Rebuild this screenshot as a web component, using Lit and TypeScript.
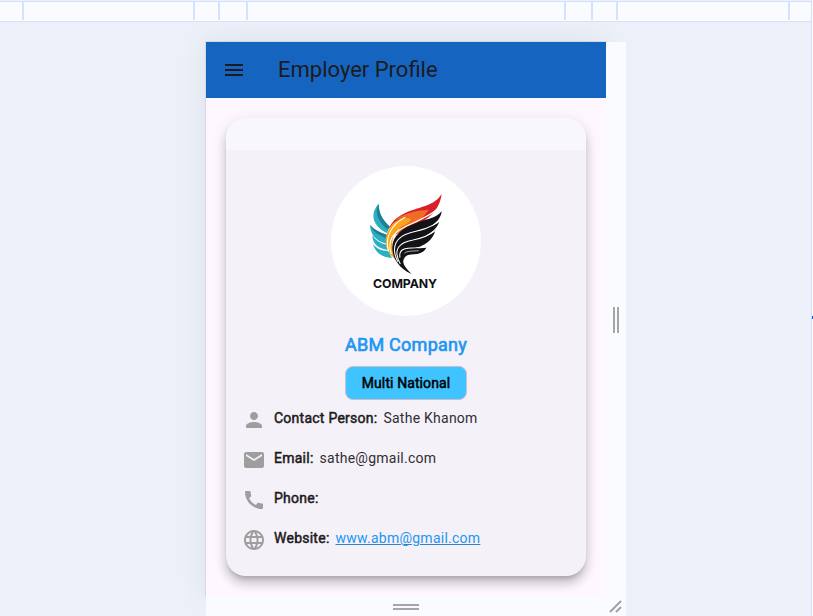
import { LitElement, html, css, svg } from "lit";
import { customElement } from "lit/decorators.js";

const ICONS = {
  person: svg`<path d="M12 12c2.21 0 4-1.79 4-4s-1.79-4-4-4-4 1.79-4 4 1.79 4 4 4zm0 2c-2.67 0-8 1.34-8 4v2h16v-2c0-2.66-5.33-4-8-4z"/>`,
  mail: svg`<path d="M20 4H4c-1.1 0-1.99.9-1.99 2L2 18c0 1.1.9 2 2 2h16c1.1 0 2-.9 2-2V6c0-1.1-.9-2-2-2zm0 4l-8 5-8-5V6l8 5 8-5v2z"/>`,
  phone: svg`<path d="M20.01 15.38c-1.23 0-2.42-.2-3.53-.56-.35-.12-.74-.03-1.01.24l-1.57 1.97c-2.83-1.35-5.48-3.9-6.89-6.83l1.95-1.66c.27-.28.35-.67.24-1.02-.37-1.11-.56-2.3-.56-3.53 0-.54-.45-.99-.99-.99H4.19C3.65 3 3 3.24 3 3.99 3 13.28 10.73 21 20.01 21c.71 0 .99-.63.99-1.18v-3.45c0-.54-.45-.99-.99-.99z"/>`,
  globe: svg`<path d="M11.99 2C6.47 2 2 6.48 2 12s4.47 10 9.99 10C17.52 22 22 17.52 22 12S17.52 2 11.99 2zm6.93 6h-2.95c-.32-1.25-.78-2.45-1.38-3.56 1.84.63 3.37 1.91 4.33 3.56zM12 4.04c.83 1.2 1.48 2.53 1.91 3.96h-3.82c.43-1.43 1.08-2.76 1.91-3.96zM4.26 14C4.1 13.36 4 12.69 4 12s.1-1.36.26-2h3.38c-.08.66-.14 1.32-.14 2s.06 1.34.14 2H4.26zm.82 2h2.95c.32 1.25.78 2.45 1.38 3.56-1.84-.63-3.37-1.9-4.33-3.56zm2.95-8H5.08c.96-1.66 2.49-2.93 4.33-3.56C8.81 5.55 8.35 6.75 8.03 8zM12 19.96c-.83-1.2-1.48-2.53-1.91-3.96h3.82c-.43 1.43-1.08 2.76-1.91 3.96zM14.34 14H9.66c-.09-.66-.16-1.32-.16-2s.07-1.35.16-2h4.68c.09.65.16 1.32.16 2s-.07 1.34-.16 2zm.25 5.56c.6-1.11 1.06-2.31 1.38-3.56h2.95c-.96 1.65-2.49 2.93-4.33 3.56zM16.36 14c.08-.66.14-1.32.14-2s-.06-1.34-.14-2h3.38c.16.64.26 1.31.26 2s-.1 1.36-.26 2h-3.38z"/>`,
};

const ROWS: { icon: keyof typeof ICONS; label: string; value: string; link?: boolean }[] = [
  { icon: "person", label: "Contact Person:", value: "Sathe Khanom" },
  { icon: "mail", label: "Email:", value: "sathe@gmail.com" },
  { icon: "phone", label: "Phone:", value: "" },
  { icon: "globe", label: "Website:", value: "www.abm@gmail.com", link: true },
];

const RULER_TICKS = [22, 193, 218, 246, 564, 591, 616, 788];

@customElement("company-logo")
export class CompanyLogo extends LitElement {
  static styles = css`
    :host { display: flex; flex-direction: column; align-items: center; width: 150px; height: 150px; border-radius: 50%; background: #fff; overflow: hidden; }
    .wings { display: block; width: 100px; height: 96px; margin-top: 14px; flex: none; }
    .name { font: 700 12.3px/14px Inter, sans-serif; color: #111116; letter-spacing: -.1px; white-space: nowrap; margin: 1px 2px 0 0; }
  `;
  render() {
    return html`
      <svg class="wings" viewBox="0 0 300 288">
        <g fill="#2bafc3">
          <path d="M68 71C42 100 47 136 94 160C95 151 98 145 102 140C82 122 68 102 68 71Z"/>
          <path d="M42 135C43 165 61 184 91 191L93 164C71 158 54 149 42 135Z"/>
          <path d="M49 166C49 191 66 206 96 210L91 194C71 190 59 181 49 166Z"/>
          <path d="M51 193C60 221 79 232 108 234L97 213C76 213 62 206 51 193Z"/>
        </g>
        <g fill="#1f7f96">
          <path d="M68 71C56 94 62 120 95 149L102 140C82 122 68 102 68 71Z"/>
          <path d="M42 135C51 156 69 168 92 174L93 164C71 158 54 149 42 135Z"/>
        </g>
        <path fill="#da1f2c" d="M257 42C235 78 192 80 154 96C124 109 108 124 100 143L146 150C198 130 249 104 257 42Z"/>
        <path fill="#ef6c24" d="M218 89C176 91 138 103 117 120C144 113 160 117 148 132C141 142 127 150 117 165C151 150 188 134 218 90Z"/>
        <path fill="#f9a61c" d="M90 195C85 160 107 111 158 115C168 117 163 125 152 132C132 143 119 153 112 171C104 194 113 219 124 242C103 227 92 212 90 195Z"/>
        <path fill="#121217" d="M257 94C239 116 208 119 182 128C137 143 107 169 109 207C110 223 116 238 124 248C134 263 149 274 167 282C151 265 136 250 144 236C150 222 166 224 184 222C197 220 207 213 212 202C201 205 191 205 182 204C207 195 231 181 238 151C230 159 221 163 211 166C231 155 243 143 250 125C243 131 235 135 228 137C242 127 255 114 257 94Z"/>
        <g fill="none" stroke="#fff" stroke-width="3.2">
          <path d="M98 215C85 173 106 133 148 112"/>
          <path d="M106 222C92 180 113 157 147 140C182 123 218 111 244 87"/>
          <path d="M126 246C102 200 121 169 163 158C199 149 224 143 247 125"/>
          <path d="M133 252C108 207 131 187 171 180C201 174 217 168 236 153"/>
          <path d="M132 233C127 207 146 203 179 203C190 201 201 204 212 201"/>
          <path d="M145 220C153 212 170 214 188 212" stroke-width="2"/>
        </g>
      </svg>
      <div class="name">COMPANY</div>
    `;
  }
}

@customElement("app-root")
export class AppRoot extends LitElement {
  static styles = css`
    :host { display: flex; flex-direction: column; width: 813px; height: 616px; position: relative; overflow: hidden; background: #ebf0f9; font-family: Roboto, sans-serif; color: #1d1b20; }
    * { box-sizing: border-box; }
    .ruler { position: relative; flex: none; height: 21px; margin-top: 1px; width: 811px; background: #f9fbff; border: solid #d3e1fb; border-width: 1px 0; }
    .tick { position: absolute; top: 0; width: 2px; height: 18px; background: #d3e3fd; }
    .edge { position: absolute; left: 811px; top: 0; width: 2px; height: 616px; border-left: 1px solid #d3e1fb; background: #f9fbff; }
    .mark { position: absolute; left: 812px; top: 316px; width: 1px; height: 3px; background: #0b57d0; }
    .viewport { display: grid; grid-template: 554px 20px / 400px 20px; margin: 20px 0 0 206px; width: 420px; }
    .screen { background: #fef7ff; box-shadow: 0 0 0 1px rgba(0,0,0,.07), 0 0 28px rgba(0,0,0,.07); }
    .handle { display: flex; align-items: center; justify-content: center; gap: 2px; background: #f9fbff; position: relative; padding-top: 2px; }
    .bottom { flex-direction: column; }
    .handle i { background: #a5a6a8; }
    .side i { width: 2px; height: 26px; }
    .bottom i { width: 26px; height: 2px; }
    .bar { height: 56px; display: flex; align-items: center; background: #1565c0; padding-left: 16px; }
    .menu { width: 24px; height: 24px; fill: #1d1b20; }
    .title { margin-left: 32px; font-size: 22px; line-height: 28px; }
    .card { width: 360px; height: 458px; margin: 20px 0 0 20px; border-radius: 20px; overflow: hidden; background: #f5f1f8; box-shadow: 0 5px 5px -3px rgba(0,0,0,.2), 0 8px 10px 1px rgba(0,0,0,.14), 0 3px 14px 2px rgba(0,0,0,.08); display: flex; flex-direction: column; align-items: center; }
    .cap { flex: none; width: 100%; height: 32px; background: #f8f7fc; margin-bottom: 16px; }
    .company { margin-top: 17px; font-size: 18px; line-height: 24px; letter-spacing: .25px; color: #2196f3; -webkit-text-stroke: .65px #2196f3; }
    .chip { margin-top: 9px; width: 122px; height: 34px; border-radius: 8px; border: 1px solid #c5bfd0; background: #40c4ff; color: #000; font-size: 14px; line-height: 32px; text-align: center; letter-spacing: .1px; -webkit-text-stroke: .5px #000; }
    .rows { width: 100%; padding: 0 18px; }
    .row { display: flex; height: 40px; font-size: 14px; line-height: 20px; letter-spacing: .25px; padding-top: 8px; }
    .icon { width: 24px; height: 24px; margin-left: -2px; fill: #9e9e9e; }
    .label { margin-left: 8px; -webkit-text-stroke: .5px #1d1b20; }
    .value { margin-left: 6px; color: #302e33; }
    .value.link { color: #2196f3; text-decoration: underline; text-decoration-color: #3b7dbd; text-decoration-thickness: 1px; }
    .grip { width: 14px; height: 14px; stroke: #a0a1a3; stroke-width: 2; fill: none; }
  `;
  render() {
    return html`
      <div class="ruler">${RULER_TICKS.map((x) => html`<div class="tick" style="left:${x}px"></div>`)}</div>
      <div class="viewport">
        <main class="screen">
          <header class="bar">
            <svg class="menu" viewBox="0 0 24 24"><path d="M3 18h18v-2H3v2zm0-5h18v-2H3v2zm0-7v2h18V6H3z"/></svg>
            <div class="title">Employer Profile</div>
          </header>
          <section class="card">
            <div class="cap"></div>
            <company-logo></company-logo>
            <div class="company">ABM Company</div>
            <div class="chip">Multi National</div>
            <div class="rows">
              ${ROWS.map((r) => html`
                <div class="row">
                  <svg class="icon" viewBox="0 0 24 24">${ICONS[r.icon]}</svg>
                  <span class="label">${r.label}</span>
                  <span class="value ${r.link ? "link" : ""}">${r.value}</span>
                </div>`)}
            </div>
          </section>
        </main>
        <div class="handle side"><i></i><i></i></div>
        <div class="handle bottom"><i></i><i></i></div>
        <div class="handle"><svg class="grip" viewBox="0 0 14 14"><path d="M1 12L12 1M7 12L12 7"/></svg></div>
      </div>
      <div class="edge"></div>
      <div class="mark"></div>
    `;
  }
}
